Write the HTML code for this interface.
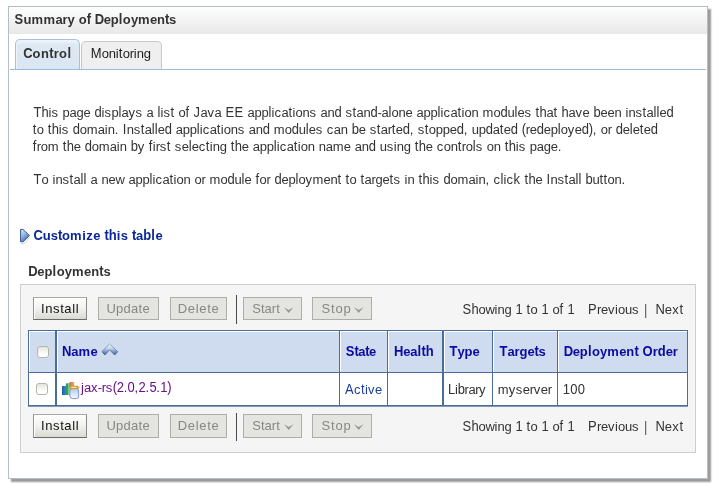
<!DOCTYPE html>
<html><head><meta charset="utf-8">
<style>
*{box-sizing:border-box;margin:0;padding:0}
html,body{width:718px;height:493px;background:#fff;overflow:hidden}
body{font-family:"Liberation Sans",sans-serif;font-size:13px;color:#333;position:relative}
div,svg{position:absolute}
#wrap{left:0;top:0;width:718px;height:493px;will-change:transform}
#panel{left:8px;top:6px;width:700px;height:473px;border:1px solid #b4bec5;background:#fff;box-shadow:3px 3px 1.5px rgba(40,40,40,.46)}
#hdr{left:9px;top:7px;width:698px;height:27px;background:linear-gradient(#fefefe,#f4f4f4 45%,#e7e8e7)}
#tline{left:10px;top:69px;width:696px;height:1px;background:#9dbbdc}
#t1{left:15px;top:39px;width:65px;height:31px;border:1px solid #a6c1e0;border-bottom:none;border-radius:5px 5px 0 0;background:linear-gradient(#eef4fa,#e6eef7 3px,#dde8f3 5px,#dae6f1);box-shadow:inset 1px 1px 0 #eef4fa}
#t2{left:81px;top:41px;width:81px;height:28px;border:1px solid #c9c9c9;border-bottom:none;border-radius:5px 5px 0 0;background:#efefef}
.t{white-space:nowrap;line-height:15px;font-size:13px;color:#333}
.b{font-weight:bold}
.blue{color:#0b2799}
.hd{color:#0b0ba0;font-weight:bold}
#box{left:20px;top:284px;width:676px;height:169px;border:1px solid #cdcdcd;background:#f5f5f5}
.btn{height:23px;border:1px solid #aeaea8;background:#e4e5e0}
.btn.on{border-color:#a9a9a5 #8a8a86 #6a6a66 #929290;background:linear-gradient(#fefefd,#f3f3f0 45%,#d9dad3);box-shadow:inset 1px 1px 0 #fff}
.bt{color:#878784;transform:none}
.sep{width:1px;height:28px;background:#4a4a4a}
.cb{width:12px;height:12px;border:1px solid #b3b6a6;border-radius:3px;background:linear-gradient(#e4e4df,#fff 75%);box-shadow:0 0 1px rgba(255,255,255,.8)}
.v{background:#4b6d98}
i{transform-origin:0 12px;transform:scaleY(1.02);margin-right:var(--m,0);display:inline-block;font-style:normal;overflow:visible;white-space:pre;height:15px;vertical-align:top}
i.u{transform:scaleY(1.115)}
.a3{width:3px}.a4{width:4px}.a5{width:5px}.a7{width:7px}.a8{width:8px}.a9{width:9px}.a10{width:10px}.a11{width:11px}.a12{width:12px}
</style></head><body>
<div id="wrap">
<div id="panel"></div>
<div id="hdr"></div>
<div id="t1"></div>
<div id="t2"></div>
<div id="tline"></div>
<svg style="left:19px;top:227px" width="14" height="19" viewBox="0 0 14 19"><defs><linearGradient id="tg" x1="0" y1="0" x2="0.6" y2="1"><stop offset="0" stop-color="#e2ecfb"/><stop offset=".45" stop-color="#9dbbe8"/><stop offset="1" stop-color="#3c64aa"/></linearGradient></defs><path d="M2 16.6 L4.6 16.6 L10.6 10" fill="none" stroke="#dcdcdc" stroke-width="1.2"/><path d="M1.6 2.4 L1.6 14.8 L4 14.8 L10.4 8.5 L4 2.4 Z" fill="url(#tg)" stroke="#34588f" stroke-width="1" stroke-linejoin="round"/></svg>
<div id="box"></div>
<!-- toolbar top -->
<div class="btn on" style="left:33px;top:297px;width:54px"></div>
<div class="btn" style="left:98px;top:297px;width:61px"></div>
<div class="btn" style="left:170px;top:297px;width:57px"></div>
<div class="sep" style="left:236px;top:295px;height:29px"></div>
<div class="btn" style="left:243px;top:297px;width:59px"></div>
<div class="btn" style="left:312px;top:297px;width:60px"></div>
<svg style="left:284px;top:306px" width="10" height="8" viewBox="0 0 10 8"><path d="M0 1.3 L4.7 4 L9.4 1.3 L4.7 7.1 Z" fill="#969692"/></svg>
<svg style="left:354px;top:306px" width="10" height="8" viewBox="0 0 10 8"><path d="M0 1.3 L4.7 4 L9.4 1.3 L4.7 7.1 Z" fill="#969692"/></svg>
<!-- toolbar bottom -->
<div class="btn on" style="left:33px;top:414px;width:54px;height:24px"></div>
<div class="btn" style="left:98px;top:414px;width:61px;height:24px"></div>
<div class="btn" style="left:170px;top:414px;width:57px;height:24px"></div>
<div class="sep" style="left:236px;top:413px"></div>
<div class="btn" style="left:243px;top:414px;width:59px;height:24px"></div>
<div class="btn" style="left:312px;top:414px;width:60px;height:24px"></div>
<svg style="left:284px;top:423px" width="10" height="8" viewBox="0 0 10 8"><path d="M0 1.3 L4.7 4 L9.4 1.3 L4.7 7.1 Z" fill="#969692"/></svg>
<svg style="left:354px;top:423px" width="10" height="8" viewBox="0 0 10 8"><path d="M0 1.3 L4.7 4 L9.4 1.3 L4.7 7.1 Z" fill="#969692"/></svg>
<!-- table -->
<div style="left:28px;top:330px;width:660px;height:77px;background:#fff"></div>
<div style="left:28px;top:330px;width:660px;height:43px;background:#cfdbee"></div>
<!-- white inner highlights -->
<div style="left:29px;top:331px;width:658px;height:1px;background:#fff"></div>
<div style="left:29px;top:331px;width:1px;height:41px;background:#fff"></div>
<div style="left:57px;top:331px;width:1px;height:41px;background:#fff"></div>
<div style="left:340px;top:331px;width:1px;height:41px;background:#fff"></div>
<div style="left:388px;top:331px;width:1px;height:41px;background:#fff"></div>
<div style="left:444px;top:331px;width:1px;height:41px;background:#fff"></div>
<div style="left:493px;top:331px;width:1px;height:41px;background:#fff"></div>
<div style="left:558px;top:331px;width:1px;height:41px;background:#fff"></div>
<!-- borders -->
<div class="v" style="left:28px;top:330px;width:660px;height:1px"></div>
<div class="v" style="left:28px;top:372px;width:660px;height:1px"></div>
<div class="v" style="left:28px;top:405px;width:660px;height:1px"></div>
<div style="left:28px;top:406px;width:660px;height:1px;background:#7f98b8"></div>
<div class="v" style="left:28px;top:330px;width:1px;height:76px"></div>
<div class="v" style="left:55px;top:330px;width:2px;height:76px"></div>
<div class="v" style="left:339px;top:330px;width:1px;height:76px"></div>
<div class="v" style="left:387px;top:330px;width:1px;height:76px"></div>
<div class="v" style="left:442px;top:330px;width:2px;height:76px"></div>
<div class="v" style="left:492px;top:330px;width:1px;height:76px"></div>
<div class="v" style="left:557px;top:330px;width:1px;height:76px"></div>
<div class="v" style="left:687px;top:330px;width:1px;height:76px"></div>
<div class="cb" style="left:37px;top:346px"></div>
<div class="cb" style="left:36px;top:383px"></div>
<!-- sort icon -->
<svg style="left:100px;top:342px" width="20" height="16" viewBox="0 0 20 16"><defs><linearGradient id="sg" x1="0" y1="0" x2="0" y2="1"><stop offset="0" stop-color="#eef3fa"/><stop offset=".4" stop-color="#c9d6ea"/><stop offset=".7" stop-color="#7c97c1"/><stop offset="1" stop-color="#3e5f97"/></linearGradient><linearGradient id="sg2" x1="0" y1="0" x2="0" y2="1"><stop offset="0" stop-color="#8ea6ca"/><stop offset="1" stop-color="#3e5e94"/></linearGradient></defs><path d="M9.6 2 L17.7 9.7 L14.7 13 L9.6 7.8 L4.9 13 L1.9 9.7 Z" fill="url(#sg)" stroke="url(#sg2)" stroke-width=".9" stroke-linejoin="round"/></svg>
<!-- app icon -->
<svg style="left:61px;top:381px" width="20" height="19" viewBox="0 0 20 19">
<defs><linearGradient id="bk" x1="0" y1="0" x2="1" y2="0"><stop offset="0" stop-color="#1b5fb2"/><stop offset="1" stop-color="#3b8ae0"/></linearGradient>
<linearGradient id="ob" x1="0" y1="0" x2="1" y2="0"><stop offset="0" stop-color="#d56f3a"/><stop offset="1" stop-color="#e9a684"/></linearGradient>
<linearGradient id="jb" x1="0" y1="0" x2="0" y2="1"><stop offset="0" stop-color="#b4c8ee"/><stop offset=".6" stop-color="#dce7fa"/><stop offset="1" stop-color="#f4f8fe"/></linearGradient></defs>
<rect x="8.4" y="1" width="4.8" height="6" fill="url(#ob)"/>
<rect x="1" y="5" width="4.4" height="9" fill="url(#bk)"/>
<rect x="4.9" y="2.4" width="3.6" height="11.6" fill="#2f9a56"/>
<rect x="6.9" y="2.4" width="1" height="11.6" fill="#7fd09a"/>
<rect x="8.9" y="7.4" width="8.8" height="10.2" rx="2.6" fill="url(#jb)" stroke="#8096c8" stroke-width="1"/>
<path d="M8.6 5 L16.6 5 L18.4 6.4 L16.6 7.8 L8.6 7.8 Z" fill="#dcaa32" stroke="#c39225" stroke-width=".5"/>
<rect x="10.6" y="5.9" width="4.6" height=".9" fill="#fdf3c8"/>
</svg>
<div class="t b" id="x_sum" style="left:14.4px;top:12px;--m:0.033px;"><i class="a9 u">S</i><i class="a8">u</i><i class="a12">m</i><i class="a12">m</i><i class="a7">a</i><i class="a5">r</i><i class="a7">y</i><i class="a4"> </i><i class="a8">o</i><i class="a4 u">f</i><i class="a4"> </i><i class="a9 u">D</i><i class="a7">e</i><i class="a8">p</i><i class="a4 u">l</i><i class="a8">o</i><i class="a7">y</i><i class="a12">m</i><i class="a7">e</i><i class="a8">n</i><i class="a4 u">t</i><i class="a7">s</i></div>
<div class="t b" id="x_ctl" style="left:23.2px;top:46px;--m:0.38px;"><i class="a9 u">C</i><i class="a8">o</i><i class="a8">n</i><i class="a4 u">t</i><i class="a5">r</i><i class="a8">o</i><i class="a4 u">l</i></div>
<div class="t" id="x_mon" style="left:90.8px;top:46px;color:#1c1c1c;"><i class="a11 u">M</i><i class="a7">o</i><i class="a7">n</i><i class="a3">i</i><i class="a4 u">t</i><i class="a7">o</i><i class="a4">r</i><i class="a3">i</i><i class="a7">n</i><i class="a7">g</i></div>
<div class="t" id="x_l1" style="left:33.4px;top:105px;"><i class="a8 u">T</i><i class="a7 u">h</i><i class="a3">i</i><i class="a7">s</i><i class="a4"> </i><i class="a7">p</i><i class="a7">a</i><i class="a7">g</i><i class="a7">e</i><i class="a4"> </i><i class="a7 u">d</i><i class="a3">i</i><i class="a7">s</i><i class="a7">p</i><i class="a3 u">l</i><i class="a7">a</i><i class="a7">y</i><i class="a7">s</i><i class="a4"> </i><i class="a7">a</i><i class="a4"> </i><i class="a3 u">l</i><i class="a3">i</i><i class="a7">s</i><i class="a4 u">t</i><i class="a4"> </i><i class="a7">o</i><i class="a4 u">f</i><i class="a4"> </i><i class="a7 u">J</i><i class="a7">a</i><i class="a7">v</i><i class="a7">a</i><i class="a4"> </i><i class="a9 u">E</i><i class="a9 u">E</i><i class="a4"> </i><i class="a7">a</i><i class="a7">p</i><i class="a7">p</i><i class="a3 u">l</i><i class="a3">i</i><i class="a7">c</i><i class="a7">a</i><i class="a4 u">t</i><i class="a3">i</i><i class="a7">o</i><i class="a7">n</i><i class="a7">s</i><i class="a4"> </i><i class="a7">a</i><i class="a7">n</i><i class="a7 u">d</i><i class="a4"> </i><i class="a7">s</i><i class="a4 u">t</i><i class="a7">a</i><i class="a7">n</i><i class="a7 u">d</i><i class="a4">-</i><i class="a7">a</i><i class="a3 u">l</i><i class="a7">o</i><i class="a7">n</i><i class="a7">e</i><i class="a4"> </i><i class="a7">a</i><i class="a7">p</i><i class="a7">p</i><i class="a3 u">l</i><i class="a3">i</i><i class="a7">c</i><i class="a7">a</i><i class="a4 u">t</i><i class="a3">i</i><i class="a7">o</i><i class="a7">n</i><i class="a4"> </i><i class="a11">m</i><i class="a7">o</i><i class="a7 u">d</i><i class="a7">u</i><i class="a3 u">l</i><i class="a7">e</i><i class="a7">s</i><i class="a4"> </i><i class="a4 u">t</i><i class="a7 u">h</i><i class="a7">a</i><i class="a4 u">t</i><i class="a4"> </i><i class="a7 u">h</i><i class="a7">a</i><i class="a7">v</i><i class="a7">e</i><i class="a4"> </i><i class="a7 u">b</i><i class="a7">e</i><i class="a7">e</i><i class="a7">n</i><i class="a4"> </i><i class="a3">i</i><i class="a7">n</i><i class="a7">s</i><i class="a4 u">t</i><i class="a7">a</i><i class="a3 u">l</i><i class="a3 u">l</i><i class="a7">e</i><i class="a7 u">d</i></div>
<div class="t" id="x_l2" style="left:32.8px;top:122px;"><i class="a4 u">t</i><i class="a7">o</i><i class="a4"> </i><i class="a4 u">t</i><i class="a7 u">h</i><i class="a3">i</i><i class="a7">s</i><i class="a4"> </i><i class="a7 u">d</i><i class="a7">o</i><i class="a11">m</i><i class="a7">a</i><i class="a3">i</i><i class="a7">n</i><i class="a4">.</i><i class="a4"> </i><i class="a4 u">I</i><i class="a7">n</i><i class="a7">s</i><i class="a4 u">t</i><i class="a7">a</i><i class="a3 u">l</i><i class="a3 u">l</i><i class="a7">e</i><i class="a7 u">d</i><i class="a4"> </i><i class="a7">a</i><i class="a7">p</i><i class="a7">p</i><i class="a3 u">l</i><i class="a3">i</i><i class="a7">c</i><i class="a7">a</i><i class="a4 u">t</i><i class="a3">i</i><i class="a7">o</i><i class="a7">n</i><i class="a7">s</i><i class="a4"> </i><i class="a7">a</i><i class="a7">n</i><i class="a7 u">d</i><i class="a4"> </i><i class="a11">m</i><i class="a7">o</i><i class="a7 u">d</i><i class="a7">u</i><i class="a3 u">l</i><i class="a7">e</i><i class="a7">s</i><i class="a4"> </i><i class="a7">c</i><i class="a7">a</i><i class="a7">n</i><i class="a4"> </i><i class="a7 u">b</i><i class="a7">e</i><i class="a4"> </i><i class="a7">s</i><i class="a4 u">t</i><i class="a7">a</i><i class="a4">r</i><i class="a4 u">t</i><i class="a7">e</i><i class="a7 u">d</i><i class="a4">,</i><i class="a4"> </i><i class="a7">s</i><i class="a4 u">t</i><i class="a7">o</i><i class="a7">p</i><i class="a7">p</i><i class="a7">e</i><i class="a7 u">d</i><i class="a4">,</i><i class="a4"> </i><i class="a7">u</i><i class="a7">p</i><i class="a7 u">d</i><i class="a7">a</i><i class="a4 u">t</i><i class="a7">e</i><i class="a7 u">d</i><i class="a4"> </i><i class="a4 u">(</i><i class="a4">r</i><i class="a7">e</i><i class="a7 u">d</i><i class="a7">e</i><i class="a7">p</i><i class="a3 u">l</i><i class="a7">o</i><i class="a7">y</i><i class="a7">e</i><i class="a7 u">d</i><i class="a4 u">)</i><i class="a4">,</i><i class="a4"> </i><i class="a7">o</i><i class="a4">r</i><i class="a4"> </i><i class="a7 u">d</i><i class="a7">e</i><i class="a3 u">l</i><i class="a7">e</i><i class="a4 u">t</i><i class="a7">e</i><i class="a7 u">d</i></div>
<div class="t" id="x_l3" style="left:32.8px;top:139px;"><i class="a4 u">f</i><i class="a4">r</i><i class="a7">o</i><i class="a11">m</i><i class="a4"> </i><i class="a4 u">t</i><i class="a7 u">h</i><i class="a7">e</i><i class="a4"> </i><i class="a7 u">d</i><i class="a7">o</i><i class="a11">m</i><i class="a7">a</i><i class="a3">i</i><i class="a7">n</i><i class="a4"> </i><i class="a7 u">b</i><i class="a7">y</i><i class="a4"> </i><i class="a4 u">f</i><i class="a3">i</i><i class="a4">r</i><i class="a7">s</i><i class="a4 u">t</i><i class="a4"> </i><i class="a7">s</i><i class="a7">e</i><i class="a3 u">l</i><i class="a7">e</i><i class="a7">c</i><i class="a4 u">t</i><i class="a3">i</i><i class="a7">n</i><i class="a7">g</i><i class="a4"> </i><i class="a4 u">t</i><i class="a7 u">h</i><i class="a7">e</i><i class="a4"> </i><i class="a7">a</i><i class="a7">p</i><i class="a7">p</i><i class="a3 u">l</i><i class="a3">i</i><i class="a7">c</i><i class="a7">a</i><i class="a4 u">t</i><i class="a3">i</i><i class="a7">o</i><i class="a7">n</i><i class="a4"> </i><i class="a7">n</i><i class="a7">a</i><i class="a11">m</i><i class="a7">e</i><i class="a4"> </i><i class="a7">a</i><i class="a7">n</i><i class="a7 u">d</i><i class="a4"> </i><i class="a7">u</i><i class="a7">s</i><i class="a3">i</i><i class="a7">n</i><i class="a7">g</i><i class="a4"> </i><i class="a4 u">t</i><i class="a7 u">h</i><i class="a7">e</i><i class="a4"> </i><i class="a7">c</i><i class="a7">o</i><i class="a7">n</i><i class="a4 u">t</i><i class="a4">r</i><i class="a7">o</i><i class="a3 u">l</i><i class="a7">s</i><i class="a4"> </i><i class="a7">o</i><i class="a7">n</i><i class="a4"> </i><i class="a4 u">t</i><i class="a7 u">h</i><i class="a3">i</i><i class="a7">s</i><i class="a4"> </i><i class="a7">p</i><i class="a7">a</i><i class="a7">g</i><i class="a7">e</i><i class="a4">.</i></div>
<div class="t" id="x_l4" style="left:33.6px;top:172px;"><i class="a8 u">T</i><i class="a7">o</i><i class="a4"> </i><i class="a3">i</i><i class="a7">n</i><i class="a7">s</i><i class="a4 u">t</i><i class="a7">a</i><i class="a3 u">l</i><i class="a3 u">l</i><i class="a4"> </i><i class="a7">a</i><i class="a4"> </i><i class="a7">n</i><i class="a7">e</i><i class="a9">w</i><i class="a4"> </i><i class="a7">a</i><i class="a7">p</i><i class="a7">p</i><i class="a3 u">l</i><i class="a3">i</i><i class="a7">c</i><i class="a7">a</i><i class="a4 u">t</i><i class="a3">i</i><i class="a7">o</i><i class="a7">n</i><i class="a4"> </i><i class="a7">o</i><i class="a4">r</i><i class="a4"> </i><i class="a11">m</i><i class="a7">o</i><i class="a7 u">d</i><i class="a7">u</i><i class="a3 u">l</i><i class="a7">e</i><i class="a4"> </i><i class="a4 u">f</i><i class="a7">o</i><i class="a4">r</i><i class="a4"> </i><i class="a7 u">d</i><i class="a7">e</i><i class="a7">p</i><i class="a3 u">l</i><i class="a7">o</i><i class="a7">y</i><i class="a11">m</i><i class="a7">e</i><i class="a7">n</i><i class="a4 u">t</i><i class="a4"> </i><i class="a4 u">t</i><i class="a7">o</i><i class="a4"> </i><i class="a4 u">t</i><i class="a7">a</i><i class="a4">r</i><i class="a7">g</i><i class="a7">e</i><i class="a4 u">t</i><i class="a7">s</i><i class="a4"> </i><i class="a3">i</i><i class="a7">n</i><i class="a4"> </i><i class="a4 u">t</i><i class="a7 u">h</i><i class="a3">i</i><i class="a7">s</i><i class="a4"> </i><i class="a7 u">d</i><i class="a7">o</i><i class="a11">m</i><i class="a7">a</i><i class="a3">i</i><i class="a7">n</i><i class="a4">,</i><i class="a4"> </i><i class="a7">c</i><i class="a3 u">l</i><i class="a3">i</i><i class="a7">c</i><i class="a7 u">k</i><i class="a4"> </i><i class="a4 u">t</i><i class="a7 u">h</i><i class="a7">e</i><i class="a4"> </i><i class="a4 u">I</i><i class="a7">n</i><i class="a7">s</i><i class="a4 u">t</i><i class="a7">a</i><i class="a3 u">l</i><i class="a3 u">l</i><i class="a4"> </i><i class="a7 u">b</i><i class="a7">u</i><i class="a4 u">t</i><i class="a4 u">t</i><i class="a7">o</i><i class="a7">n</i><i class="a4">.</i></div>
<div class="t b blue" id="x_cus" style="left:33.6px;top:228px;--m:0.095px;"><i class="a9 u">C</i><i class="a8">u</i><i class="a7">s</i><i class="a4 u">t</i><i class="a8">o</i><i class="a12">m</i><i class="a4">i</i><i class="a7">z</i><i class="a7">e</i><i class="a4"> </i><i class="a4 u">t</i><i class="a8 u">h</i><i class="a4">i</i><i class="a7">s</i><i class="a4"> </i><i class="a4 u">t</i><i class="a7">a</i><i class="a8 u">b</i><i class="a4 u">l</i><i class="a7">e</i></div>
<div class="t b" id="x_dep" style="left:28.2px;top:264px;--m:0.13px;"><i class="a9 u">D</i><i class="a7">e</i><i class="a8">p</i><i class="a4 u">l</i><i class="a8">o</i><i class="a7">y</i><i class="a12">m</i><i class="a7">e</i><i class="a8">n</i><i class="a4 u">t</i><i class="a7">s</i></div>
<div class="t bt" id="x_i1" style="left:41.0px;top:301px;color:#111;letter-spacing:0.6px;">Install</div>
<div class="t bt" id="x_u1" style="left:106.4px;top:301px;letter-spacing:0.26px;">Update</div>
<div class="t bt" id="x_d1" style="left:177.7px;top:301px;letter-spacing:0.68px;">Delete</div>
<div class="t bt" id="x_s1" style="left:252.2px;top:301px;letter-spacing:0.05px;">Start</div>
<div class="t bt" id="x_p1" style="left:321.5px;top:301px;letter-spacing:0.867px;">Stop</div>
<div class="t" id="x_sh1" style="left:462.4px;top:302px;"><i class="a9 u">S</i><i class="a7 u">h</i><i class="a7">o</i><i class="a9">w</i><i class="a3">i</i><i class="a7">n</i><i class="a7">g</i><i class="a4"> </i><i class="a7 u">1</i><i class="a4"> </i><i class="a4 u">t</i><i class="a7">o</i><i class="a4"> </i><i class="a7 u">1</i><i class="a4"> </i><i class="a7">o</i><i class="a4 u">f</i><i class="a4"> </i><i class="a7 u">1</i></div>
<div class="t" id="x_pr1" style="left:588px;top:302px;"><i class="a9 u">P</i><i class="a4">r</i><i class="a7">e</i><i class="a7">v</i><i class="a3">i</i><i class="a7">o</i><i class="a7">u</i><i class="a7">s</i></div>
<div class="t" id="x_br1" style="left:644px;top:303px;color:#555;transform:scaleY(1.1);transform-origin:0 12px;"><i class="a3">|</i></div>
<div class="t" id="x_nx1" style="left:655.4px;top:302px;--m:0.4px;"><i class="a9 u">N</i><i class="a7">e</i><i class="a7">x</i><i class="a4 u">t</i></div>
<div class="t bt" id="x_i2" style="left:41.0px;top:418px;color:#111;letter-spacing:0.6px;">Install</div>
<div class="t bt" id="x_u2" style="left:106.4px;top:418px;letter-spacing:0.26px;">Update</div>
<div class="t bt" id="x_d2" style="left:177.7px;top:418px;letter-spacing:0.68px;">Delete</div>
<div class="t bt" id="x_s2" style="left:252.2px;top:418px;letter-spacing:0.05px;">Start</div>
<div class="t bt" id="x_p2" style="left:321.5px;top:418px;letter-spacing:0.867px;">Stop</div>
<div class="t" id="x_sh2" style="left:462.4px;top:419px;"><i class="a9 u">S</i><i class="a7 u">h</i><i class="a7">o</i><i class="a9">w</i><i class="a3">i</i><i class="a7">n</i><i class="a7">g</i><i class="a4"> </i><i class="a7 u">1</i><i class="a4"> </i><i class="a4 u">t</i><i class="a7">o</i><i class="a4"> </i><i class="a7 u">1</i><i class="a4"> </i><i class="a7">o</i><i class="a4 u">f</i><i class="a4"> </i><i class="a7 u">1</i></div>
<div class="t" id="x_pr2" style="left:588px;top:419px;"><i class="a9 u">P</i><i class="a4">r</i><i class="a7">e</i><i class="a7">v</i><i class="a3">i</i><i class="a7">o</i><i class="a7">u</i><i class="a7">s</i></div>
<div class="t" id="x_br2" style="left:644px;top:420px;color:#555;transform:scaleY(1.1);transform-origin:0 12px;"><i class="a3">|</i></div>
<div class="t" id="x_nx2" style="left:655.4px;top:419px;--m:0.4px;"><i class="a9 u">N</i><i class="a7">e</i><i class="a7">x</i><i class="a4 u">t</i></div>
<div class="t hd" id="x_hn" style="left:62px;top:344px;--m:0.2px;"><i class="a9 u">N</i><i class="a7">a</i><i class="a12">m</i><i class="a7">e</i></div>
<div class="t hd" id="x_hs" style="left:345.8px;top:344px;--m:-0.22px;"><i class="a9 u">S</i><i class="a4 u">t</i><i class="a7">a</i><i class="a4 u">t</i><i class="a7">e</i></div>
<div class="t hd" id="x_hh" style="left:394.1px;top:344px;--m:0.12px;"><i class="a9 u">H</i><i class="a7">e</i><i class="a7">a</i><i class="a4 u">l</i><i class="a4 u">t</i><i class="a8 u">h</i></div>
<div class="t hd" id="x_ht" style="left:449.5px;top:344px;"><i class="a8 u">T</i><i class="a7">y</i><i class="a8">p</i><i class="a7">e</i></div>
<div class="t hd" id="x_hg" style="left:499.4px;top:344px;"><i class="a8 u">T</i><i class="a7">a</i><i class="a5">r</i><i class="a8">g</i><i class="a7">e</i><i class="a4 u">t</i><i class="a7">s</i></div>
<div class="t hd" id="x_ho" style="left:563.7px;top:344px;--m:0.087px;"><i class="a9 u">D</i><i class="a7">e</i><i class="a8">p</i><i class="a4 u">l</i><i class="a8">o</i><i class="a7">y</i><i class="a12">m</i><i class="a7">e</i><i class="a8">n</i><i class="a4 u">t</i><i class="a4"> </i><i class="a10 u">O</i><i class="a5">r</i><i class="a8 u">d</i><i class="a7">e</i><i class="a5">r</i></div>
<div class="t" id="x_jax" style="left:81px;top:380px;color:#6b0f8a;--m:-0.056px;"><i class="a3">j</i><i class="a7">a</i><i class="a7">x</i><i class="a4">-</i><i class="a4">r</i><i class="a7">s</i><i class="a4 u">(</i><i class="a7 u">2</i><i class="a4">.</i><i class="a7 u">0</i><i class="a4">,</i><i class="a7 u">2</i><i class="a4">.</i><i class="a7 u">5</i><i class="a4">.</i><i class="a7 u">1</i><i class="a4 u">)</i></div>
<div class="t" id="x_act" style="left:345px;top:382px;color:#1a3ea0;"><i class="a9 u">A</i><i class="a7">c</i><i class="a4 u">t</i><i class="a3">i</i><i class="a7">v</i><i class="a7">e</i></div>
<div class="t" id="x_lib" style="left:448.1px;top:382px;--m:-0.18px;"><i class="a7 u">L</i><i class="a3">i</i><i class="a7 u">b</i><i class="a4">r</i><i class="a7">a</i><i class="a4">r</i><i class="a7">y</i></div>
<div class="t" id="x_mys" style="left:497.7px;top:382px;"><i class="a11">m</i><i class="a7">y</i><i class="a7">s</i><i class="a7">e</i><i class="a4">r</i><i class="a7">v</i><i class="a7">e</i><i class="a4">r</i></div>
<div class="t" id="x_100" style="left:562.8px;top:382px;--m:0.5px;"><i class="a7 u">1</i><i class="a7 u">0</i><i class="a7 u">0</i></div>
</div>
</body></html>
